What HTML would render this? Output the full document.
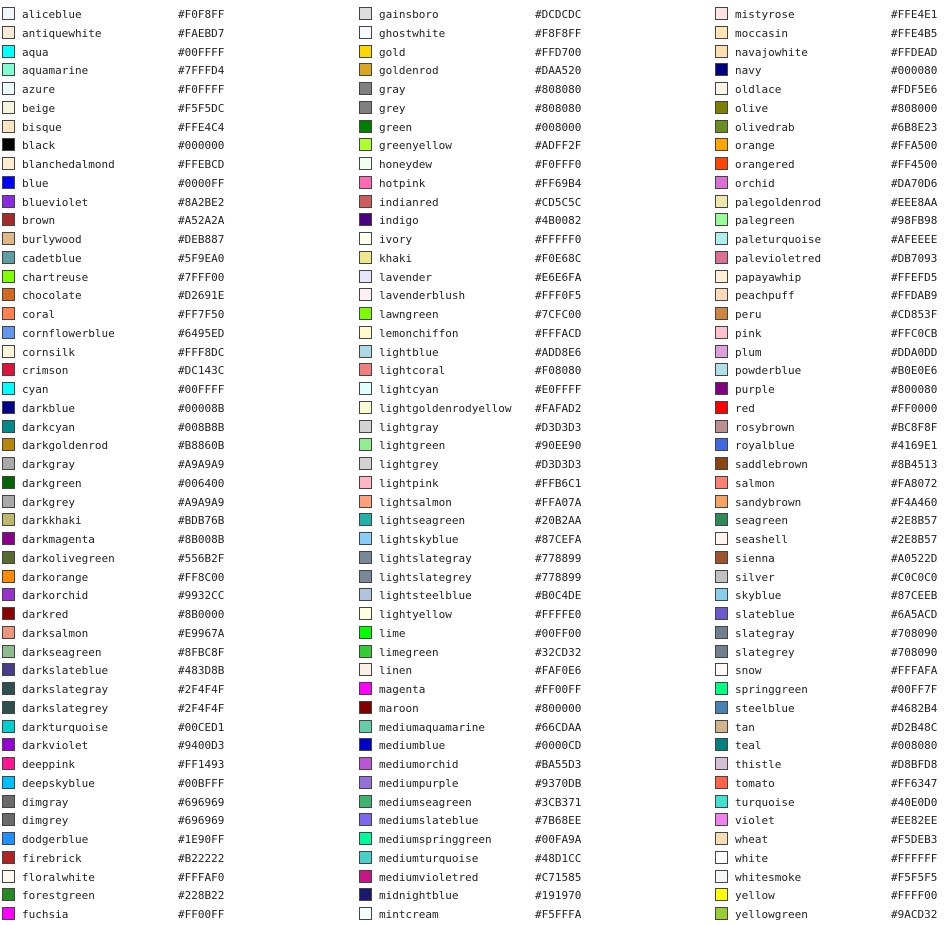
<!DOCTYPE html>
<html><head><meta charset="utf-8"><style>
body{margin:0;width:946px;height:921px;background:#fff;overflow:hidden;font-family:"DejaVu Sans Mono","Liberation Mono",monospace;font-size:11px;color:#222}
.c{position:absolute;top:4px;width:240px}
.r{position:relative;height:18.75px;line-height:21px}
.r i{position:absolute;left:2px;top:3px;width:11px;height:11px;border:1px solid #444}
.r b{position:absolute;left:22px;font-weight:normal}
.r u{position:absolute;left:178px;text-decoration:none}
</style></head><body>
<div class="c" style="left:0">
<div class="r"><i style="background:#F0F8FF"></i><b>aliceblue</b><u>#F0F8FF</u></div>
<div class="r"><i style="background:#FAEBD7"></i><b>antiquewhite</b><u>#FAEBD7</u></div>
<div class="r"><i style="background:#00FFFF"></i><b>aqua</b><u>#00FFFF</u></div>
<div class="r"><i style="background:#7FFFD4"></i><b>aquamarine</b><u>#7FFFD4</u></div>
<div class="r"><i style="background:#F0FFFF"></i><b>azure</b><u>#F0FFFF</u></div>
<div class="r"><i style="background:#F5F5DC"></i><b>beige</b><u>#F5F5DC</u></div>
<div class="r"><i style="background:#FFE4C4"></i><b>bisque</b><u>#FFE4C4</u></div>
<div class="r"><i style="background:#000000"></i><b>black</b><u>#000000</u></div>
<div class="r"><i style="background:#FFEBCD"></i><b>blanchedalmond</b><u>#FFEBCD</u></div>
<div class="r"><i style="background:#0000FF"></i><b>blue</b><u>#0000FF</u></div>
<div class="r"><i style="background:#8A2BE2"></i><b>blueviolet</b><u>#8A2BE2</u></div>
<div class="r"><i style="background:#A52A2A"></i><b>brown</b><u>#A52A2A</u></div>
<div class="r"><i style="background:#DEB887"></i><b>burlywood</b><u>#DEB887</u></div>
<div class="r"><i style="background:#5F9EA0"></i><b>cadetblue</b><u>#5F9EA0</u></div>
<div class="r"><i style="background:#7FFF00"></i><b>chartreuse</b><u>#7FFF00</u></div>
<div class="r"><i style="background:#D2691E"></i><b>chocolate</b><u>#D2691E</u></div>
<div class="r"><i style="background:#FF7F50"></i><b>coral</b><u>#FF7F50</u></div>
<div class="r"><i style="background:#6495ED"></i><b>cornflowerblue</b><u>#6495ED</u></div>
<div class="r"><i style="background:#FFF8DC"></i><b>cornsilk</b><u>#FFF8DC</u></div>
<div class="r"><i style="background:#DC143C"></i><b>crimson</b><u>#DC143C</u></div>
<div class="r"><i style="background:#00FFFF"></i><b>cyan</b><u>#00FFFF</u></div>
<div class="r"><i style="background:#00008B"></i><b>darkblue</b><u>#00008B</u></div>
<div class="r"><i style="background:#008B8B"></i><b>darkcyan</b><u>#008B8B</u></div>
<div class="r"><i style="background:#B8860B"></i><b>darkgoldenrod</b><u>#B8860B</u></div>
<div class="r"><i style="background:#A9A9A9"></i><b>darkgray</b><u>#A9A9A9</u></div>
<div class="r"><i style="background:#006400"></i><b>darkgreen</b><u>#006400</u></div>
<div class="r"><i style="background:#A9A9A9"></i><b>darkgrey</b><u>#A9A9A9</u></div>
<div class="r"><i style="background:#BDB76B"></i><b>darkkhaki</b><u>#BDB76B</u></div>
<div class="r"><i style="background:#8B008B"></i><b>darkmagenta</b><u>#8B008B</u></div>
<div class="r"><i style="background:#556B2F"></i><b>darkolivegreen</b><u>#556B2F</u></div>
<div class="r"><i style="background:#FF8C00"></i><b>darkorange</b><u>#FF8C00</u></div>
<div class="r"><i style="background:#9932CC"></i><b>darkorchid</b><u>#9932CC</u></div>
<div class="r"><i style="background:#8B0000"></i><b>darkred</b><u>#8B0000</u></div>
<div class="r"><i style="background:#E9967A"></i><b>darksalmon</b><u>#E9967A</u></div>
<div class="r"><i style="background:#8FBC8F"></i><b>darkseagreen</b><u>#8FBC8F</u></div>
<div class="r"><i style="background:#483D8B"></i><b>darkslateblue</b><u>#483D8B</u></div>
<div class="r"><i style="background:#2F4F4F"></i><b>darkslategray</b><u>#2F4F4F</u></div>
<div class="r"><i style="background:#2F4F4F"></i><b>darkslategrey</b><u>#2F4F4F</u></div>
<div class="r"><i style="background:#00CED1"></i><b>darkturquoise</b><u>#00CED1</u></div>
<div class="r"><i style="background:#9400D3"></i><b>darkviolet</b><u>#9400D3</u></div>
<div class="r"><i style="background:#FF1493"></i><b>deeppink</b><u>#FF1493</u></div>
<div class="r"><i style="background:#00BFFF"></i><b>deepskyblue</b><u>#00BFFF</u></div>
<div class="r"><i style="background:#696969"></i><b>dimgray</b><u>#696969</u></div>
<div class="r"><i style="background:#696969"></i><b>dimgrey</b><u>#696969</u></div>
<div class="r"><i style="background:#1E90FF"></i><b>dodgerblue</b><u>#1E90FF</u></div>
<div class="r"><i style="background:#B22222"></i><b>firebrick</b><u>#B22222</u></div>
<div class="r"><i style="background:#FFFAF0"></i><b>floralwhite</b><u>#FFFAF0</u></div>
<div class="r"><i style="background:#228B22"></i><b>forestgreen</b><u>#228B22</u></div>
<div class="r"><i style="background:#FF00FF"></i><b>fuchsia</b><u>#FF00FF</u></div>
</div>
<div class="c" style="left:357px">
<div class="r"><i style="background:#DCDCDC"></i><b>gainsboro</b><u>#DCDCDC</u></div>
<div class="r"><i style="background:#F8F8FF"></i><b>ghostwhite</b><u>#F8F8FF</u></div>
<div class="r"><i style="background:#FFD700"></i><b>gold</b><u>#FFD700</u></div>
<div class="r"><i style="background:#DAA520"></i><b>goldenrod</b><u>#DAA520</u></div>
<div class="r"><i style="background:#808080"></i><b>gray</b><u>#808080</u></div>
<div class="r"><i style="background:#808080"></i><b>grey</b><u>#808080</u></div>
<div class="r"><i style="background:#008000"></i><b>green</b><u>#008000</u></div>
<div class="r"><i style="background:#ADFF2F"></i><b>greenyellow</b><u>#ADFF2F</u></div>
<div class="r"><i style="background:#F0FFF0"></i><b>honeydew</b><u>#F0FFF0</u></div>
<div class="r"><i style="background:#FF69B4"></i><b>hotpink</b><u>#FF69B4</u></div>
<div class="r"><i style="background:#CD5C5C"></i><b>indianred</b><u>#CD5C5C</u></div>
<div class="r"><i style="background:#4B0082"></i><b>indigo</b><u>#4B0082</u></div>
<div class="r"><i style="background:#FFFFF0"></i><b>ivory</b><u>#FFFFF0</u></div>
<div class="r"><i style="background:#F0E68C"></i><b>khaki</b><u>#F0E68C</u></div>
<div class="r"><i style="background:#E6E6FA"></i><b>lavender</b><u>#E6E6FA</u></div>
<div class="r"><i style="background:#FFF0F5"></i><b>lavenderblush</b><u>#FFF0F5</u></div>
<div class="r"><i style="background:#7CFC00"></i><b>lawngreen</b><u>#7CFC00</u></div>
<div class="r"><i style="background:#FFFACD"></i><b>lemonchiffon</b><u>#FFFACD</u></div>
<div class="r"><i style="background:#ADD8E6"></i><b>lightblue</b><u>#ADD8E6</u></div>
<div class="r"><i style="background:#F08080"></i><b>lightcoral</b><u>#F08080</u></div>
<div class="r"><i style="background:#E0FFFF"></i><b>lightcyan</b><u>#E0FFFF</u></div>
<div class="r"><i style="background:#FAFAD2"></i><b>lightgoldenrodyellow</b><u>#FAFAD2</u></div>
<div class="r"><i style="background:#D3D3D3"></i><b>lightgray</b><u>#D3D3D3</u></div>
<div class="r"><i style="background:#90EE90"></i><b>lightgreen</b><u>#90EE90</u></div>
<div class="r"><i style="background:#D3D3D3"></i><b>lightgrey</b><u>#D3D3D3</u></div>
<div class="r"><i style="background:#FFB6C1"></i><b>lightpink</b><u>#FFB6C1</u></div>
<div class="r"><i style="background:#FFA07A"></i><b>lightsalmon</b><u>#FFA07A</u></div>
<div class="r"><i style="background:#20B2AA"></i><b>lightseagreen</b><u>#20B2AA</u></div>
<div class="r"><i style="background:#87CEFA"></i><b>lightskyblue</b><u>#87CEFA</u></div>
<div class="r"><i style="background:#778899"></i><b>lightslategray</b><u>#778899</u></div>
<div class="r"><i style="background:#778899"></i><b>lightslategrey</b><u>#778899</u></div>
<div class="r"><i style="background:#B0C4DE"></i><b>lightsteelblue</b><u>#B0C4DE</u></div>
<div class="r"><i style="background:#FFFFE0"></i><b>lightyellow</b><u>#FFFFE0</u></div>
<div class="r"><i style="background:#00FF00"></i><b>lime</b><u>#00FF00</u></div>
<div class="r"><i style="background:#32CD32"></i><b>limegreen</b><u>#32CD32</u></div>
<div class="r"><i style="background:#FAF0E6"></i><b>linen</b><u>#FAF0E6</u></div>
<div class="r"><i style="background:#FF00FF"></i><b>magenta</b><u>#FF00FF</u></div>
<div class="r"><i style="background:#800000"></i><b>maroon</b><u>#800000</u></div>
<div class="r"><i style="background:#66CDAA"></i><b>mediumaquamarine</b><u>#66CDAA</u></div>
<div class="r"><i style="background:#0000CD"></i><b>mediumblue</b><u>#0000CD</u></div>
<div class="r"><i style="background:#BA55D3"></i><b>mediumorchid</b><u>#BA55D3</u></div>
<div class="r"><i style="background:#9370DB"></i><b>mediumpurple</b><u>#9370DB</u></div>
<div class="r"><i style="background:#3CB371"></i><b>mediumseagreen</b><u>#3CB371</u></div>
<div class="r"><i style="background:#7B68EE"></i><b>mediumslateblue</b><u>#7B68EE</u></div>
<div class="r"><i style="background:#00FA9A"></i><b>mediumspringgreen</b><u>#00FA9A</u></div>
<div class="r"><i style="background:#48D1CC"></i><b>mediumturquoise</b><u>#48D1CC</u></div>
<div class="r"><i style="background:#C71585"></i><b>mediumvioletred</b><u>#C71585</u></div>
<div class="r"><i style="background:#191970"></i><b>midnightblue</b><u>#191970</u></div>
<div class="r"><i style="background:#F5FFFA"></i><b>mintcream</b><u>#F5FFFA</u></div>
</div>
<div class="c" style="left:713px">
<div class="r"><i style="background:#FFE4E1"></i><b>mistyrose</b><u>#FFE4E1</u></div>
<div class="r"><i style="background:#FFE4B5"></i><b>moccasin</b><u>#FFE4B5</u></div>
<div class="r"><i style="background:#FFDEAD"></i><b>navajowhite</b><u>#FFDEAD</u></div>
<div class="r"><i style="background:#000080"></i><b>navy</b><u>#000080</u></div>
<div class="r"><i style="background:#FDF5E6"></i><b>oldlace</b><u>#FDF5E6</u></div>
<div class="r"><i style="background:#808000"></i><b>olive</b><u>#808000</u></div>
<div class="r"><i style="background:#6B8E23"></i><b>olivedrab</b><u>#6B8E23</u></div>
<div class="r"><i style="background:#FFA500"></i><b>orange</b><u>#FFA500</u></div>
<div class="r"><i style="background:#FF4500"></i><b>orangered</b><u>#FF4500</u></div>
<div class="r"><i style="background:#DA70D6"></i><b>orchid</b><u>#DA70D6</u></div>
<div class="r"><i style="background:#EEE8AA"></i><b>palegoldenrod</b><u>#EEE8AA</u></div>
<div class="r"><i style="background:#98FB98"></i><b>palegreen</b><u>#98FB98</u></div>
<div class="r"><i style="background:#AFEEEE"></i><b>paleturquoise</b><u>#AFEEEE</u></div>
<div class="r"><i style="background:#DB7093"></i><b>palevioletred</b><u>#DB7093</u></div>
<div class="r"><i style="background:#FFEFD5"></i><b>papayawhip</b><u>#FFEFD5</u></div>
<div class="r"><i style="background:#FFDAB9"></i><b>peachpuff</b><u>#FFDAB9</u></div>
<div class="r"><i style="background:#CD853F"></i><b>peru</b><u>#CD853F</u></div>
<div class="r"><i style="background:#FFC0CB"></i><b>pink</b><u>#FFC0CB</u></div>
<div class="r"><i style="background:#DDA0DD"></i><b>plum</b><u>#DDA0DD</u></div>
<div class="r"><i style="background:#B0E0E6"></i><b>powderblue</b><u>#B0E0E6</u></div>
<div class="r"><i style="background:#800080"></i><b>purple</b><u>#800080</u></div>
<div class="r"><i style="background:#FF0000"></i><b>red</b><u>#FF0000</u></div>
<div class="r"><i style="background:#BC8F8F"></i><b>rosybrown</b><u>#BC8F8F</u></div>
<div class="r"><i style="background:#4169E1"></i><b>royalblue</b><u>#4169E1</u></div>
<div class="r"><i style="background:#8B4513"></i><b>saddlebrown</b><u>#8B4513</u></div>
<div class="r"><i style="background:#FA8072"></i><b>salmon</b><u>#FA8072</u></div>
<div class="r"><i style="background:#F4A460"></i><b>sandybrown</b><u>#F4A460</u></div>
<div class="r"><i style="background:#2E8B57"></i><b>seagreen</b><u>#2E8B57</u></div>
<div class="r"><i style="background:#FFF5EE"></i><b>seashell</b><u>#2E8B57</u></div>
<div class="r"><i style="background:#A0522D"></i><b>sienna</b><u>#A0522D</u></div>
<div class="r"><i style="background:#C0C0C0"></i><b>silver</b><u>#C0C0C0</u></div>
<div class="r"><i style="background:#87CEEB"></i><b>skyblue</b><u>#87CEEB</u></div>
<div class="r"><i style="background:#6A5ACD"></i><b>slateblue</b><u>#6A5ACD</u></div>
<div class="r"><i style="background:#708090"></i><b>slategray</b><u>#708090</u></div>
<div class="r"><i style="background:#708090"></i><b>slategrey</b><u>#708090</u></div>
<div class="r"><i style="background:#FFFAFA"></i><b>snow</b><u>#FFFAFA</u></div>
<div class="r"><i style="background:#00FF7F"></i><b>springgreen</b><u>#00FF7F</u></div>
<div class="r"><i style="background:#4682B4"></i><b>steelblue</b><u>#4682B4</u></div>
<div class="r"><i style="background:#D2B48C"></i><b>tan</b><u>#D2B48C</u></div>
<div class="r"><i style="background:#008080"></i><b>teal</b><u>#008080</u></div>
<div class="r"><i style="background:#D8BFD8"></i><b>thistle</b><u>#D8BFD8</u></div>
<div class="r"><i style="background:#FF6347"></i><b>tomato</b><u>#FF6347</u></div>
<div class="r"><i style="background:#40E0D0"></i><b>turquoise</b><u>#40E0D0</u></div>
<div class="r"><i style="background:#EE82EE"></i><b>violet</b><u>#EE82EE</u></div>
<div class="r"><i style="background:#F5DEB3"></i><b>wheat</b><u>#F5DEB3</u></div>
<div class="r"><i style="background:#FFFFFF"></i><b>white</b><u>#FFFFFF</u></div>
<div class="r"><i style="background:#F5F5F5"></i><b>whitesmoke</b><u>#F5F5F5</u></div>
<div class="r"><i style="background:#FFFF00"></i><b>yellow</b><u>#FFFF00</u></div>
<div class="r"><i style="background:#9ACD32"></i><b>yellowgreen</b><u>#9ACD32</u></div>
</div>
</body></html>
